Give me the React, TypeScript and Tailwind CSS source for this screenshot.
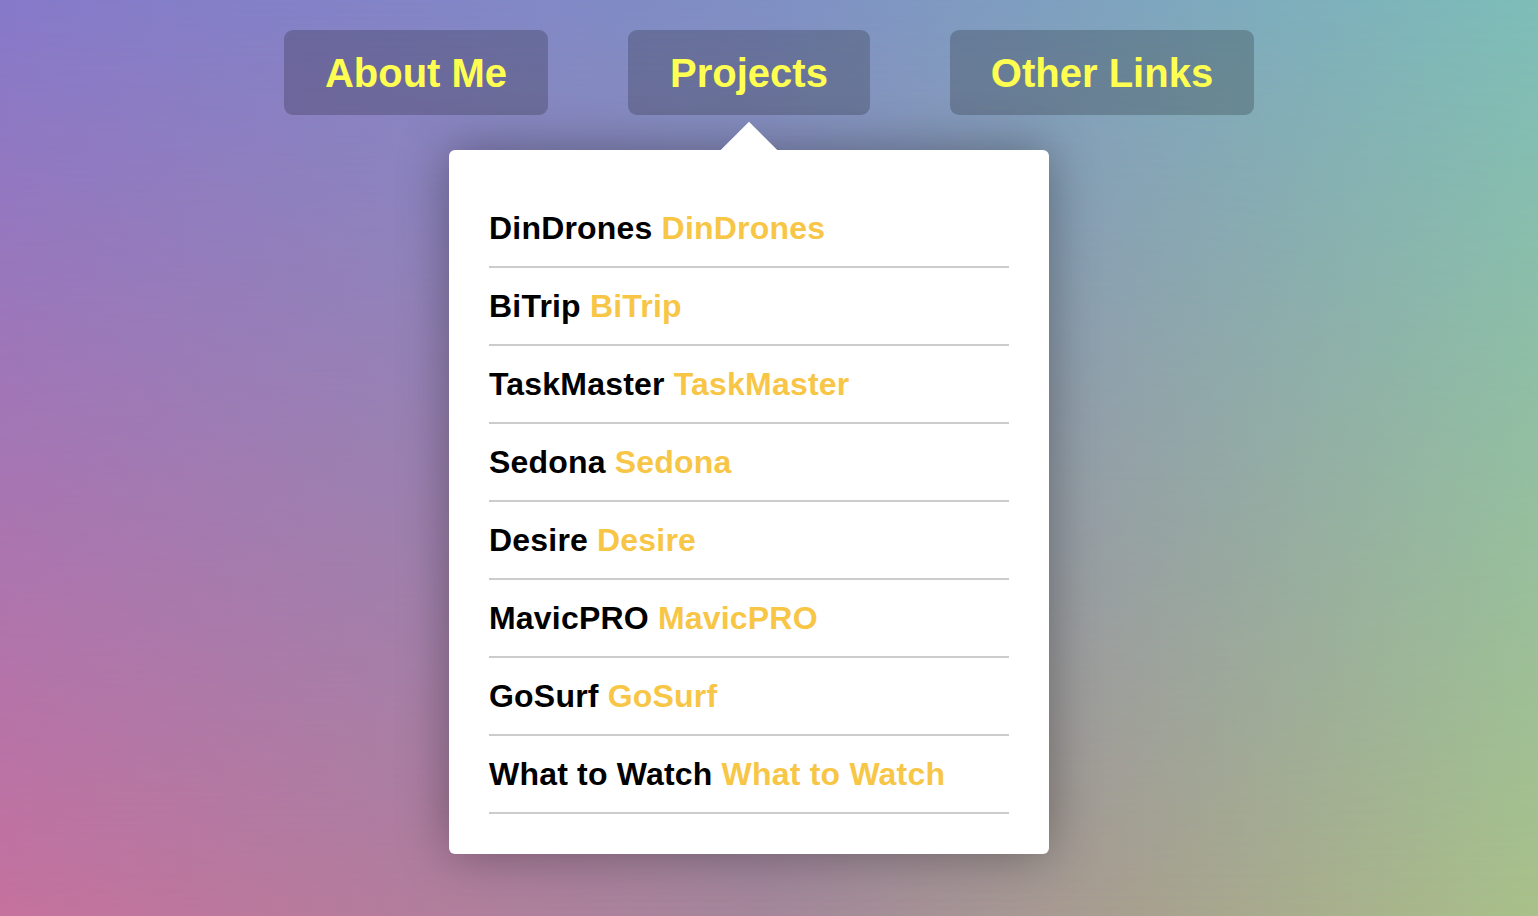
const projects = [
  "DinDrones",
  "BiTrip",
  "TaskMaster",
  "Sedona",
  "Desire",
  "MavicPRO",
  "GoSurf",
  "What to Watch",
];

function NavButton({
  label,
  width,
  children,
}: {
  label: string;
  width: string;
  children?: React.ReactNode;
}) {
  return (
    <div className="relative">
      <button
        className={`${width} h-[85px] flex items-center justify-center rounded-[9px] bg-black/20 text-[40px] font-bold text-[#ffff52] leading-none`}
      >
        {label}
      </button>
      {children}
    </div>
  );
}

export default function App() {
  return (
    <div className="grid min-h-screen w-full font-['Liberation_Sans',Arial,sans-serif]">
      {/* background: two gradients blended vertically */}
      <div className="[grid-area:1/1] min-h-screen bg-[linear-gradient(to_right,#c5729e_0%,#a4879b_50%,#a89e90_72%,#a9c18a_100%)]" />
      <div className="[grid-area:1/1] min-h-screen bg-[linear-gradient(to_right,#8679c9_0%,#7f8fc4_50%,#7dbdb8_100%)] [mask-image:linear-gradient(to_bottom,black,transparent)]" />

      <div className="[grid-area:1/1] z-10 flex justify-center gap-20 pt-[30px]">
        <NavButton label="About Me" width="w-[264px]" />
        <NavButton label="Projects" width="w-[242px]">
          <div className="absolute top-[120px] left-1/2 -translate-x-1/2 w-[600px]">
            <div className="relative rounded-md bg-white px-10 py-10 shadow-[0_0_50px_rgba(0,0,0,0.35)]">
              {projects.map((p) => (
                <div
                  key={p}
                  className="flex h-[78px] items-center border-b-2 border-[#cccccc] text-[32px] font-bold whitespace-nowrap tracking-[0.2px]"
                >
                  <span className="text-black">{p}</span>
                  <span className="ml-[9px] text-[#f8c646]">{p}</span>
                </div>
              ))}
            </div>
            <div className="absolute -top-5 left-1/2 -ml-5 w-10 h-10 rotate-45 bg-white" />
          </div>
        </NavButton>
        <NavButton label="Other Links" width="w-[304px]" />
      </div>
    </div>
  );
}
